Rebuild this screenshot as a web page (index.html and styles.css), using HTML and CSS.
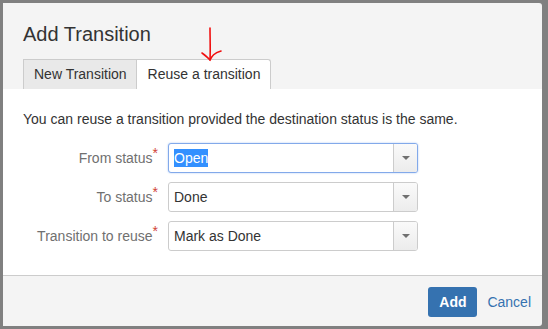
FILE: index.html
```html
<!DOCTYPE html>
<html>
<head>
    <meta charset="utf-8" />
    <title>Add Transition</title>
    <link rel="stylesheet" href="styles.css">
</head>
<body>
    <div class="dialog">
        <div class="dialog-header">
            <h2 class="dialog-title">Add Transition</h2>
            <div class="tabs">
                <div class="tab">New Transition</div>
                <div class="tab active">Reuse a transition</div>
            </div>
            <svg class="scribble" width="30" height="40" viewBox="0 0 30 40">
                <path d="M13 1 C13 10 13.5 22 13 33" />
                <path d="M5 26 C8 28 11 31 13 33 C15 29 17 26 24 24" />
            </svg>
        </div>
        <div class="dialog-body">
            <p class="intro">You can reuse a transition provided the destination status is the same.</p>
            <div class="form">
                <label class="field-label">From status<span class="req">*</span></label>
                <div class="select focused">
                    <span class="value"><span class="picked">Open</span></span>
                    <span class="drop"><i class="caret"></i></span>
                </div>

                <label class="field-label">To status<span class="req">*</span></label>
                <div class="select">
                    <span class="value">Done</span>
                    <span class="drop"><i class="caret"></i></span>
                </div>

                <label class="field-label">Transition to reuse<span class="req">*</span></label>
                <div class="select">
                    <span class="value">Mark as Done</span>
                    <span class="drop"><i class="caret"></i></span>
                </div>
            </div>
        </div>
        <div class="dialog-footer">
            <button class="btn-primary">Add</button>
            <a class="cancel" href="#">Cancel</a>
        </div>
    </div>
</body>
</html>
```

FILE: styles.css
```css
html, body {
    margin: 0;
    padding: 0;
    background: #808080;
    font-family: "Liberation Sans", Arial, sans-serif;
    font-size: 14px;
    color: #333;
}
.dialog {
    margin: 3px 0 0 3px;
    width: 539px;
    background: #f4f4f4;
    border-radius: 0 3px 3px 0;
    overflow: hidden;
}
.dialog-header {
    position: relative;
    padding: 19px 20px 0;
}
.dialog-title {
    margin: 0 0 13px;
    font-size: 20px;
    font-weight: normal;
    line-height: 24px;
    color: #333;
}
.tabs {
    display: flex;
}
.tab {
    height: 29px;
    line-height: 29px;
    padding: 0 9px 0 10px;
    border: 1px solid #ccc;
    border-bottom: none;
    background: #e9e9e9;
    color: #333;
}
.tab.active {
    background: #fff;
    border-left: none;
    padding: 0 10px 0 11px;
    border-radius: 0 3px 0 0;
}
.scribble {
    position: absolute;
    left: 194px;
    top: 24px;
    fill: none;
    stroke: #f01010;
    stroke-width: 1.6;
    stroke-linecap: round;
}
.dialog-body {
    background: #fff;
    padding: 20px 20px 24px;
    border-bottom: 1px solid #ccc;
}
.intro {
    margin: 0 0 14px;
    line-height: 20px;
}
.form {
    display: grid;
    grid-template-columns: 135px 250px;
    column-gap: 10px;
    row-gap: 9px;
}
.field-label {
    text-align: right;
    line-height: 30px;
    color: #707070;
}
.req {
    color: #d04437;
    vertical-align: 5px;
    line-height: 0;
}
.select {
    display: flex;
    height: 28px;
    border: 1px solid #ccc;
    border-radius: 3px;
    background: #fff;
}
.select.focused {
    border-color: #82a9ea;
    box-shadow: 0 0 2px #a9c5f3;
}
.value {
    flex: 1;
    padding-left: 5px;
    line-height: 28px;
    color: #333;
}
.picked {
    background: #3390ff;
    color: #fff;
    padding: 1px 0;
}
.drop {
    width: 23px;
    border-left: 1px solid #ccc;
    border-radius: 0 2px 2px 0;
    background: linear-gradient(#fafafa, #ececec);
    display: flex;
    align-items: center;
    justify-content: center;
}
.caret {
    width: 0;
    height: 0;
    border-left: 4px solid transparent;
    border-right: 4px solid transparent;
    border-top: 4px solid #707070;
}
.dialog-footer {
    display: flex;
    justify-content: flex-end;
    align-items: center;
    height: 50px;
    padding: 1px 11px 0 0;
    box-sizing: border-box;
}
.btn-primary {
    height: 30px;
    width: 49px;
    border: none;
    border-radius: 3px;
    background: #3572b0;
    color: #fff;
    font-family: inherit;
    font-size: 14px;
    font-weight: bold;
    padding: 0;
}
.cancel {
    margin-left: 10px;
    color: #3572b0;
    text-decoration: none;
}
```
